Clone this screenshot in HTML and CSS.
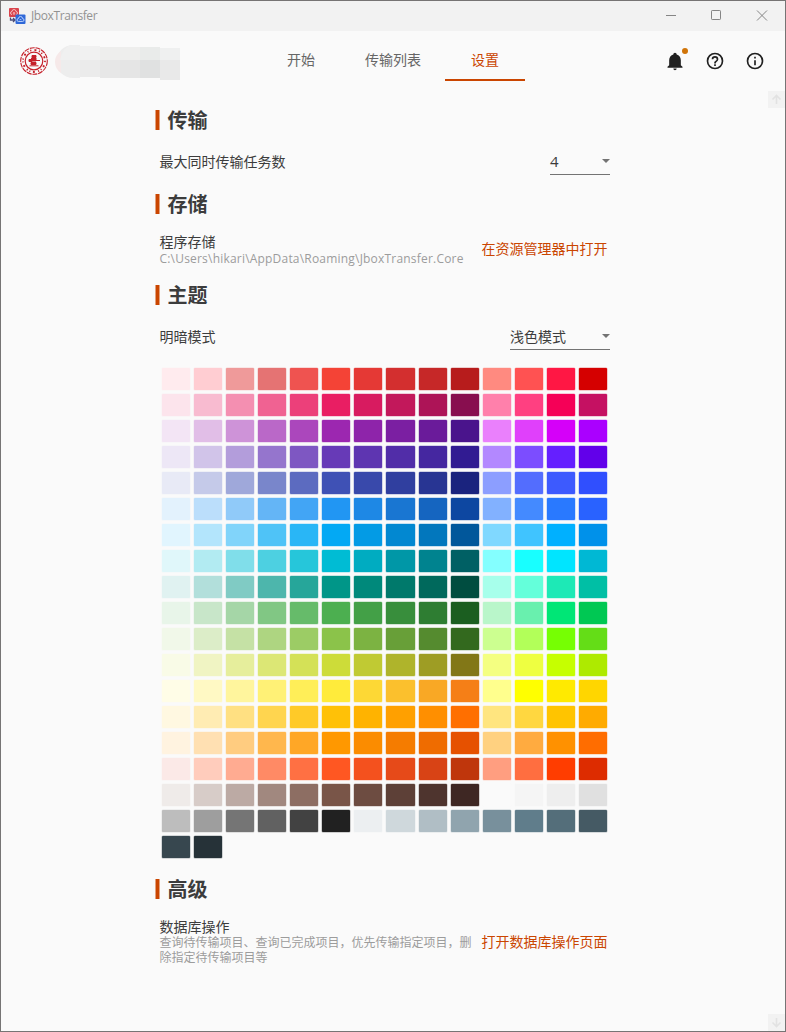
FILE: index.html
```html
<!DOCTYPE html>
<html lang="zh-CN">
<head>
<meta charset="utf-8">
<title>JboxTransfer</title>
<link rel="stylesheet" href="styles.css">
</head>
<body>
<div class="window">
  <div class="titlebar">
    <svg class="app-icon" width="17" height="17" viewBox="0 0 17 17">
      <rect x="0" y="0" width="10" height="9" rx="1" fill="#d9434c"/>
      <path d="M3 6.5a1.5 1.5 0 0 1 0-3 2 2 0 0 1 4 0 1.5 1.5 0 0 1 0 3M5 7V4.5M3.8 5.5 5 4.5l1.2 1" fill="none" stroke="#f6c8cb" stroke-width=".9"/>
      <path d="M1.5 9.5v2.5h4M4 10l2 2-2 2" fill="none" stroke="#4b4d78" stroke-width="1.3"/>
      <rect x="6.5" y="6.5" width="10" height="9.5" rx="1" fill="#2f68d8"/>
      <path d="M9.5 13.5a1.5 1.5 0 0 1 0-3 2 2 0 0 1 4 0 1.5 1.5 0 0 1 0 3zM10.5 12.2l1-1 1 1" fill="none" stroke="#c4d7fa" stroke-width=".9"/>
    </svg>
    <span class="app-name">JboxTransfer</span>
    <svg class="controls" width="104" height="12" viewBox="0 0 104 12" fill="none" stroke="#858585">
      <path d="M0 5.5h10M91 .5l10 10M101 .5l-10 10"/>
      <rect x="45.5" y=".5" width="9" height="9" rx=".7"/>
    </svg>
  </div>
  <header class="header">
    <div class="account">
      <svg width="28" height="28" viewBox="0 0 28 28" fill="none" stroke="#c5202a">
        <circle cx="14" cy="14" r="13.3" stroke-width="1.1" stroke-dasharray="5 .8"/>
        <circle cx="14" cy="14" r="11" stroke-width="1.8" stroke-dasharray="1.2 3.2 2 2.6 1 1.9"/>
        <circle cx="14" cy="14" r="8.8" stroke-width="1.2"/>
        <path d="M12 8.500h4v2h-4zM11.500 11h4.500v3h-4.500zM9 12.500h3v2H9zM15 13.500h5M11 15.500h5v2h-5zM9.500 18.800h9" fill="#c5202a" stroke-width="1"/>
      </svg>
      <svg width="126" height="36" viewBox="0 0 126 36">
        <path d="M18 0h7v33h-7A16.500 16.500 0 0 1 18 0z" fill="#ededed"/>
        <path d="M6 6v22Q0 24 0 17T6 6z" fill="#f6e9e9"/>
        <path d="M18 0h7v15H5Q8 1 18 0z" fill="#f0f0f0"/>
        <path d="M25 1h20v14H25z" fill="#f1f1f1"/><path d="M45 2h40v13H45z" fill="#eeeeed"/>
        <path d="M85 2h20v13H85z" fill="#e9ebea"/><path d="M105 3h20v12h-20z" fill="#eff0f0"/>
        <path d="M25 15h20v17H25z" fill="#ebebeb"/><path d="M45 15h20v18H45z" fill="#e7e7e7"/>
        <path d="M65 15h20v18H65z" fill="#e5e5e5"/><path d="M85 15h20v18H85z" fill="#e0e1e1"/>
        <path d="M105 15h20v20h-20z" fill="#e9e9e9"/>
      </svg>
    </div>
    <nav class="tabs">
      <span class="tab">开始</span>
      <span class="tab tab-wide">传输列表</span>
      <span class="tab active">设置</span>
    </nav>
    <div class="actions">
      <span class="bell">
        <svg width="20" height="20" viewBox="0 0 24 24" fill="#202020"><path d="M21 19v1H3v-1l2-2v-6c0-3.100 2.030-5.830 5-6.710V4a2 2 0 0 1 4 0v.29c2.970.88 5 3.610 5 6.710v6l2 2M14 21a2 2 0 0 1-4 0"/></svg>
        <i class="dot"></i>
      </span>
      <svg width="20" height="20" viewBox="0 0 24 24" fill="#202020"><path d="M11 18h2v-2h-2v2m1-16A10 10 0 0 0 2 12a10 10 0 0 0 10 10 10 10 0 0 0 10-10A10 10 0 0 0 12 2m0 18a8 8 0 1 1 0-16 8 8 0 0 1 0 16m0-14a4 4 0 0 0-4 4h2a2 2 0 1 1 4 0c0 2-3 1.750-3 5h2c0-2.250 3-2.500 3-5a4 4 0 0 0-4-4z"/></svg>
      <svg width="20" height="20" viewBox="0 0 24 24" fill="#202020"><path d="M11 9h2V7h-2m1 13a8 8 0 1 1 0-16 8 8 0 0 1 0 16m0-18A10 10 0 0 0 2 12a10 10 0 0 0 10 10 10 10 0 0 0 10-10A10 10 0 0 0 12 2m-1 15h2v-6h-2v6z"/></svg>
    </div>
  </header>
  <div class="body">
    <main class="settings">
      <h2>传输</h2>
      <div class="row">
        <span>最大同时传输任务数</span>
        <span class="select select-small"><span class="number">4</span><i class="caret"></i></span>
      </div>
      <h2>存储</h2>
      <div class="row row-detail">
        <div class="detail"><div>程序存储</div><p class="path">C:\Users\hikari\AppData\Roaming\JboxTransfer.Core</p></div>
        <span class="link link-open">在资源管理器中打开</span>
      </div>
      <h2>主题</h2>
      <div class="row">
        <span>明暗模式</span>
        <span class="select"><span>浅色模式</span><i class="caret"></i></span>
      </div>
      <div class="palette" id="palette"></div>
      <h2>高级</h2>
      <div class="row row-detail row-last">
        <div class="detail"><div>数据库操作</div><p>查询待传输项目、查询已完成项目，优先传输指定项目，删除指定待传输项目等</p></div>
        <span class="link">打开数据库操作页面</span>
      </div>
    </main>
    <div class="scrollbar">
      <span><svg width="17" height="17" viewBox="0 0 17 17"><path d="M8.500 13V5M4.500 8.500l4-4 4 4" fill="none" stroke="#e2e2e2" stroke-width="1.600"/></svg></span>
      <span><svg width="17" height="17" viewBox="0 0 17 17"><path d="M8.500 4v8M4.500 8.500l4 4 4-4" fill="none" stroke="#e2e2e2" stroke-width="1.600"/></svg></span>
    </div>
  </div>
</div>
<script src="palette.js"></script>
</body>
</html>
```
FILE: styles.css
```css
* { box-sizing: border-box; }
body {
  margin: 0;
  font: 14px/18px "Noto Sans", "Noto Sans CJK SC", sans-serif;
  color: #3c3c3c;
}
.window {
  width: 786px;
  height: 1032px;
  border: 1px solid #767474;
  background: #fafafa;
  display: flex;
  flex-direction: column;
}
.titlebar {
  height: 30px;
  background: #f2f2f2;
  display: flex;
  align-items: center;
  padding: 0 15px 0 8px;
}
.app-name {
  margin-left: 5px;
  font: 12px/16px "Open Sans", sans-serif;
  letter-spacing: -.4px;
  color: #929292;
}
.controls { margin-left: auto; }
.header {
  height: 60px;
  display: grid;
  grid-template-columns: 264px 260px 1fr;
}
.account {
  display: flex;
  align-items: center;
  gap: 7px;
  padding-left: 19px;
}
.account svg { flex: none; }
.account svg:last-child { margin-top: 4px; }
.tabs { display: flex; height: 50px; }
.tab {
  width: 72px;
  line-height: 58px;
  text-align: center;
  color: #666;
}
.tab-wide { width: 108px; padding-left: 4px; }
.tab.active {
  width: 80px;
  color: #ca4500;
  border-bottom: 2px solid #ca4500;
}
.actions {
  display: flex;
  align-items: center;
  justify-content: flex-end;
  gap: 20px;
  padding-right: 20px;
}
.bell { position: relative; height: 20px; }
.bell svg { display: block; }
.dot {
  position: absolute;
  left: 17px;
  top: -3px;
  width: 6px;
  height: 6px;
  border-radius: 50%;
  background: #d07408;
}
.body {
  flex: 1;
  display: flex;
  justify-content: space-between;
}
.settings { width: 456px; margin-left: 154px; padding-top: 14px; }
h2 {
  margin: 0;
  height: 30px;
  display: flex;
  align-items: center;
  gap: 8px;
  font-size: 20px;
  line-height: 30px;
  font-weight: 700;
  padding-top: 1px;
}
h2::before {
  content: "";
  width: 5px;
  height: 20px;
  margin: -2px -.5px 0 0;
  background: linear-gradient(90deg, #e3a17d 1px, #ca4500 1px 4px, #e3a17d 4px);
}
.row {
  display: flex;
  justify-content: space-between;
  height: 26px;
  line-height: 26px;
  margin: 14px 1px 14px 4.5px;
}
.select {
  width: 100px;
  border-bottom: 1px solid #737373;
  display: flex;
  justify-content: space-between;
  align-items: center;
  line-height: 23px;
}
.select > span { margin-top: -1px; }
.select-small { width: 60px; }
.number { font-family: "Open Sans", sans-serif; font-size: 15px; }
.caret {
  border: 4px solid transparent;
  border-top-color: #737373;
  border-bottom: 0;
  margin-bottom: 2px;
}
.row-detail {
  align-items: center;
  height: 30px;
  line-height: 17px;
  margin: 15px 3.5px 16px 4.5px;
}
.detail { width: 314px; }
.detail p {
  margin: 0;
  font-size: 12px;
  line-height: 15px;
  color: #9c9c9c;
}
.detail .path {
  font-family: "Open Sans", sans-serif;
  letter-spacing: .2px;
  padding-top: 1px;
  white-space: nowrap;
}
.link { color: #ca4500; white-space: nowrap; }
.link-open { margin-top: -2px; }
.row-last { height: 48px; margin-top: 13px; }
.palette {
  display: grid;
  grid-template-columns: repeat(14, 28.15px);
  grid-auto-rows: 22px;
  gap: 4px;
  margin: 18px 0 16px 6.5px;
}
.palette i {
  border-radius: 1px;
  box-shadow: 0 0 0 .5px color-mix(in srgb, var(--swatch) 40%, transparent);
  background: var(--swatch);
}
.scrollbar {
  width: 17px;
  display: flex;
  flex-direction: column;
  justify-content: space-between;
}
.scrollbar span { height: 17px; background: #f2f2f2; }
.scrollbar svg { display: block; }
```
FILE: palette.js
```javascript
const colors = `
ffebee ffcdd2 ef9a9a e57373 ef5350 f44336 e53935 d32f2f c62828 b71c1c ff8a80 ff5252 ff1744 d50000
fce4ec f8bbd0 f48fb1 f06292 ec407a e91e63 d81b60 c2185b ad1457 880e4f ff80ab ff4081 f50057 c51162
f3e5f5 e1bee7 ce93d8 ba68c8 ab47bc 9c27b0 8e24aa 7b1fa2 6a1b9a 4a148c ea80fc e040fb d500f9 aa00ff
ede7f6 d1c4e9 b39ddb 9575cd 7e57c2 673ab7 5e35b1 512da8 4527a0 311b92 b388ff 7c4dff 651fff 6200ea
e8eaf6 c5cae9 9fa8da 7986cb 5c6bc0 3f51b5 3949ab 303f9f 283593 1a237e 8c9eff 536dfe 3d5afe 304ffe
e3f2fd bbdefb 90caf9 64b5f6 42a5f5 2196f3 1e88e5 1976d2 1565c0 0d47a1 82b1ff 448aff 2979ff 2962ff
e1f5fe b3e5fc 81d4fa 4fc3f7 29b6f6 03a9f4 039be5 0288d1 0277bd 01579b 80d8ff 40c4ff 00b0ff 0091ea
e0f7fa b2ebf2 80deea 4dd0e1 26c6da 00bcd4 00acc1 0097a7 00838f 006064 84ffff 18ffff 00e5ff 00b8d4
e0f2f1 b2dfdb 80cbc4 4db6ac 26a69a 009688 00897b 00796b 00695c 004d40 a7ffeb 64ffda 1de9b6 00bfa5
e8f5e9 c8e6c9 a5d6a7 81c784 66bb6a 4caf50 43a047 388e3c 2e7d32 1b5e20 b9f6ca 69f0ae 00e676 00c853
f1f8e9 dcedc8 c5e1a5 aed581 9ccc65 8bc34a 7cb342 689f38 558b2f 33691e ccff90 b2ff59 76ff03 64dd17
f9fbe7 f0f4c3 e6ee9c dce775 d4e157 cddc39 c0ca33 afb42b 9e9d24 827717 f4ff81 eeff41 c6ff00 aeea00
fffde7 fff9c4 fff59d fff176 ffee58 ffeb3b fdd835 fbc02d f9a825 f57f17 ffff8d ffff00 ffea00 ffd600
fff8e1 ffecb3 ffe082 ffd54f ffca28 ffc107 ffb300 ffa000 ff8f00 ff6f00 ffe57f ffd740 ffc400 ffab00
fff3e0 ffe0b2 ffcc80 ffb74d ffa726 ff9800 fb8c00 f57c00 ef6c00 e65100 ffd180 ffab40 ff9100 ff6d00
fbe9e7 ffccbc ffab91 ff8a65 ff7043 ff5722 f4511e e64a19 d84315 bf360c ff9e80 ff6e40 ff3d00 dd2c00
efebe9 d7ccc8 bcaaa4 a1887f 8d6e63 795548 6d4c41 5d4037 4e342e 3e2723 fafafa f5f5f5 eeeeee e0e0e0
bdbdbd 9e9e9e 757575 616161 424242 212121 eceff1 cfd8dc b0bec5 90a4ae 78909c 607d8b 546e7a 455a64
37474f 263238`.trim().split(/\s+/);
const palette = document.getElementById("palette");
for (const color of colors) {
  const swatch = document.createElement("i");
  swatch.style.setProperty("--swatch", "#" + color);
  palette.append(swatch);
}
```
